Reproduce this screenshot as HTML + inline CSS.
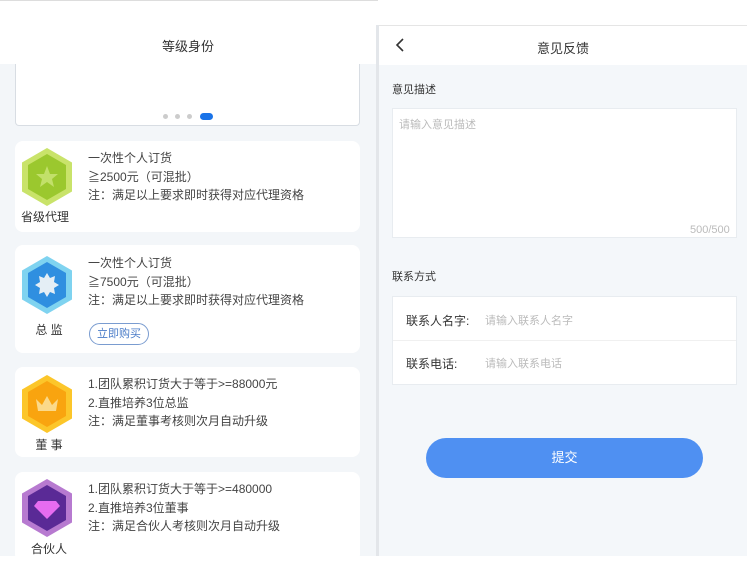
<!DOCTYPE html>
<html><head><meta charset="utf-8"><style>
*{margin:0;padding:0;box-sizing:border-box}
body{width:747px;height:556px;overflow:hidden;background:#fff;font-family:"Liberation Sans","Noto Sans CJK SC",sans-serif;position:relative;color:#333}
.a{position:absolute}
.t{font-size:12px;color:#444;white-space:nowrap}
.card{position:absolute;left:15px;width:345px;background:#fff;border-radius:8px}
.lbl{position:absolute;font-size:12px;color:#333;width:60px;text-align:center;left:-11px}
</style></head><body>
<div class="a" style="left:0;top:0;width:378px;height:1px;background:#ddd"></div>
<!-- left panel -->
<div class="a" style="left:0;top:25px;width:376px;height:531px;background:#f3f6f9"></div>
<div class="a" style="left:0;top:25px;width:376px;height:39px;background:#fff"></div>
<div class="a t" style="left:0;width:376px;top:36px;text-align:center;font-size:13px;color:#333">等级身份</div>
<div class="a" style="left:15px;top:64px;width:345px;height:62px;background:#fff;border:1px solid #d8dde3;border-top:none;border-radius:0 0 4px 4px"></div>
<div class="a" style="left:163px;top:114px;width:5px;height:5px;border-radius:50%;background:#ccc"></div>
<div class="a" style="left:175px;top:114px;width:5px;height:5px;border-radius:50%;background:#ccc"></div>
<div class="a" style="left:187px;top:114px;width:5px;height:5px;border-radius:50%;background:#ccc"></div>
<div class="a" style="left:200px;top:113px;width:13px;height:7px;border-radius:4px;background:#1a73e8"></div>
<div class="a" style="left:376px;top:25px;width:3px;height:531px;background:#e3e6ea"></div>

<div class="card" style="top:141px;height:91px">
<svg class="a" style="left:7px;top:7px" width="50" height="58" viewBox="0 0 50 58"><polygon points="25,0 50,14.5 50,43.5 25,58 0,43.5 0,14.5" fill="#c9e36a"/><polygon points="25,6 44,17 44,41 25,52 6,41 6,17" fill="#9bc82e"/><polygon points="25,18 28,26 36,26 30,31 32,39 25,34 18,39 20,31 14,26 22,26" fill="#c2e06a"/></svg>
<div class="lbl" style="top:67px;left:0">省级代理</div>
<div class="a t" style="left:73px;top:8px">一次性个人订货</div>
<div class="a t" style="left:73px;top:27px">≧2500元（可混批）</div>
<div class="a t" style="left:73px;top:45px">注：满足以上要求即时获得对应代理资格</div>
</div>

<div class="card" style="top:245px;height:108px">
<svg class="a" style="left:7px;top:11px" width="50" height="58" viewBox="0 0 50 58"><polygon points="25,0 50,14.5 50,43.5 25,58 0,43.5 0,14.5" fill="#7fd3f0"/><polygon points="25,6 44,17 44,41 25,52 6,41 6,17" fill="#2f8fe0"/><polygon points="25,17 28,22 33,20 32,26 37,29 32,32 33,38 28,36 25,41 22,36 17,38 18,32 13,29 18,26 17,20 22,22" fill="#e4eef5"/></svg>
<div class="lbl" style="top:76px;left:4px">总 监</div>
<div class="a t" style="left:73px;top:9px">一次性个人订货</div>
<div class="a t" style="left:73px;top:28px">≧7500元（可混批）</div>
<div class="a t" style="left:73px;top:46px">注：满足以上要求即时获得对应代理资格</div>
<div class="a" style="left:74px;top:78px;width:60px;height:22px;border:1px solid #7a9cd0;border-radius:11px;font-size:11px;color:#4a7cc8;text-align:center;line-height:20px">立即购买</div>
</div>

<div class="card" style="top:367px;height:90px">
<svg class="a" style="left:7px;top:8px" width="50" height="58" viewBox="0 0 50 58"><polygon points="25,0 50,14.5 50,43.5 25,58 0,43.5 0,14.5" fill="#fcc62a"/><polygon points="25,6 44,17 44,41 25,52 6,41 6,17" fill="#f9a40f"/><polygon points="14,24 20,30 25,21 30,30 36,24 34,36 16,36" fill="#fbd98a"/></svg>
<div class="lbl" style="top:69px;left:4px">董 事</div>
<div class="a t" style="left:73px;top:8px">1.团队累积订货大于等于&gt;=88000元</div>
<div class="a t" style="left:73px;top:27px">2.直推培养3位总监</div>
<div class="a t" style="left:73px;top:45px">注：满足董事考核则次月自动升级</div>
</div>

<div class="card" style="top:472px;height:90px">
<svg class="a" style="left:7px;top:7px" width="50" height="58" viewBox="0 0 50 58"><polygon points="25,0 50,14.5 50,43.5 25,58 0,43.5 0,14.5" fill="#b77ad0"/><polygon points="25,6 44,17 44,41 25,52 6,41 6,17" fill="#5a2a96"/><polygon points="16,22 34,22 38,27 25,40 12,27" fill="#e66cf0"/></svg>
<div class="lbl" style="top:68px;left:4px">合伙人</div>
<div class="a t" style="left:73px;top:8px">1.团队累积订货大于等于&gt;=480000</div>
<div class="a t" style="left:73px;top:27px">2.直推培养3位董事</div>
<div class="a t" style="left:73px;top:45px">注：满足合伙人考核则次月自动升级</div>
</div>

<!-- right panel -->
<div class="a" style="left:379px;top:25px;width:368px;height:531px;background:#f4f7fa"></div>
<div class="a" style="left:379px;top:25px;width:368px;height:40px;background:#fff;border-top:1px solid #e5e5e5"></div>
<svg class="a" style="left:395px;top:38px" width="10" height="14" viewBox="0 0 10 14"><path d="M8 1 L2 7 L8 13" fill="none" stroke="#333" stroke-width="1.6"/></svg>
<div class="a t" style="left:379px;width:368px;text-align:center;top:38px;font-size:13px;color:#333">意见反馈</div>
<div class="a t" style="left:392px;top:81px;font-size:11px;color:#333">意见描述</div>
<div class="a" style="left:392px;top:108px;width:345px;height:130px;background:#fff;border:1px solid #e8ecf0"></div>
<div class="a t" style="left:399px;top:116px;font-size:11px;color:#bbb">请输入意见描述</div>
<div class="a t" style="left:690px;top:224px;font-size:11px;color:#bbb">500/500</div>
<div class="a t" style="left:392px;top:268px;font-size:11px;color:#333">联系方式</div>
<div class="a" style="left:392px;top:296px;width:345px;height:89px;background:#fff;border:1px solid #e8ecf0"></div>
<div class="a" style="left:393px;top:340px;width:343px;height:1px;background:#f0f0f0"></div>
<div class="a t" style="left:406px;top:312px;font-size:12px;color:#333">联系人名字:</div>
<div class="a t" style="left:485px;top:312px;font-size:11px;color:#bbb">请输入联系人名字</div>
<div class="a t" style="left:406px;top:355px;font-size:12px;color:#333">联系电话:</div>
<div class="a t" style="left:485px;top:355px;font-size:11px;color:#bbb">请输入联系电话</div>
<div class="a" style="left:426px;top:438px;width:277px;height:40px;border-radius:20px;background:#4f90f2;color:#fff;font-size:13px;text-align:center;line-height:40px">提交</div>
</body></html>
